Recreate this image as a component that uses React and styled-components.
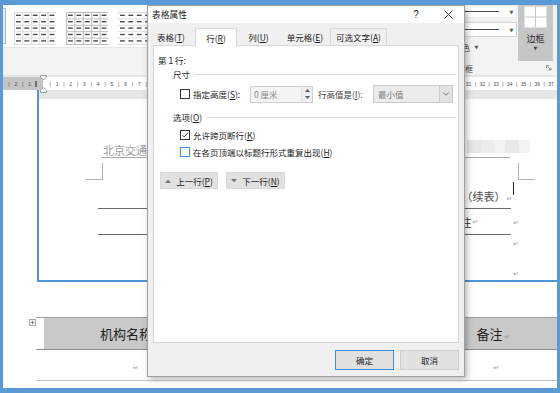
import React from 'react';
import styled, { createGlobalStyle } from 'styled-components';

const BLUE = '#5b9bd5';
const FONT = '"Noto Sans CJK SC", "Noto Sans", sans-serif';

const GlobalStyle = createGlobalStyle`
  html, body { margin: 0; padding: 0; background: #ffffff; }
  body { font-family: ${FONT}; }
  * { box-sizing: border-box; }
`;

const Frame = styled.div`
  position: relative;
  width: 560px;
  height: 393px;
  border-style: solid;
  border-color: ${BLUE};
  border-width: 5px 3px 5px 3px;
  background: #fff;
  display: flex;
  flex-direction: column;
  overflow: hidden;
`;

/* ---------------- Ribbon ---------------- */
const Ribbon = styled.div`
  height: 70px;
  flex: none;
  display: flex;
  background: #f3f3f3;
`;
const GalleryGroup = styled.div`
  flex: 1;
  display: flex;
  flex-direction: column;
`;
const Gallery = styled.div`
  height: 43px;
  background: #fff;
  display: flex;
  align-items: flex-start;
  padding-top: 7px;
  gap: 10px;
  border-bottom: 1px solid #e6e6e6;
`;
const EdgeItem = styled.div`
  width: 3px;
  height: 36px;
  margin-top: -4px;
  margin-right: -2px;
  border: 1px solid #b9b9b9;
  border-left: none;
  background: #ededed;
`;
const BordersGroup = styled.div`
  width: 140px;
  display: flex;
  flex-direction: column;
`;
const BordersTop = styled.div`
  height: 56px;
  display: flex;
  padding-right: 4px;
`;
const LineControls = styled.div`
  width: 100px;
  margin-right: 1px;
  display: flex;
  flex-direction: column;
`;
const LineBox = styled.div`
  height: ${(p) => p.h}px;
  margin-top: ${(p) => p.mt}px;
  background: #fff;
  border: 1px solid ${(p) => p.bc};
  display: flex;
  align-items: center;
`;
const LineSample = styled.div`
  flex: 1;
  height: 1px;
  background: #4a4a4a;
  margin-right: 8px;
`;
const SmallArrow = styled.span`
  width: 9px;
  font-family: "DejaVu Sans", sans-serif;
  font-size: 5px;
  color: #555;
  text-align: center;
`;
const PenRow = styled.div`
  margin-top: 4px;
  height: 12px;
  display: flex;
  align-items: center;
  padding-left: 29px;
  font-size: 8px;
  color: #333;
  gap: 2px;
`;
const BigButton = styled.div`
  width: 35px;
  height: 56px;
  background: #c6c6c6;
  display: flex;
  flex-direction: column;
  align-items: center;
  padding-top: 1px;
`;
const BigLabel = styled.div`
  margin-top: 5px;
  font-size: 9px;
  line-height: 11px;
  color: #2b2b2b;
`;
const BigArrow = styled.div`
  font-family: "DejaVu Sans", sans-serif;
  font-size: 5px;
  line-height: 8px;
  color: #444;
`;
const GroupLabelRow = styled.div`
  height: 14px;
  display: flex;
  align-items: center;
  padding-right: 5px;
  font-size: 8px;
  color: #444;
`;
const GroupLabel = styled.span`
  margin-left: 40px;
  width: 16px;
  white-space: nowrap;
`;
const Spacer = styled.div`
  flex: 1;
`;

/* ---------------- Ruler ---------------- */
const RulerBar = styled.div`
  position: relative;
  z-index: 1;
  height: 15px;
  flex: none;
  background: #e6e6e6;
  padding-top: 2px;
`;
const RulerStrip = styled.div`
  height: 13px;
  background: linear-gradient(to right, #c4c4c4 0, #c4c4c4 40px, #ffffff 40px);
  display: flex;
  align-items: center;
  padding-left: 2.6px;
  font-family: "Liberation Sans", sans-serif;
  font-size: 5px;
  color: #4d4d4d;
  white-space: nowrap;
  overflow: hidden;
`;
const RulerCell = styled.span`
  flex: none;
  width: 6.86px;
  display: flex;
  justify-content: center;
`;
const RulerBlock = styled.span`
  width: 2px;
  height: 6px;
  background: #6e6e6e;
`;
const IndentMarker = styled.svg`
  position: absolute;
  left: 37px;
  top: 0;
`;

/* ---------------- Document ---------------- */
const DocArea = styled.div`
  flex: 1;
  display: flex;
  flex-direction: column;
  background: #fff;
`;
const TopSection = styled.div`
  height: 192px;
  flex: none;
  display: flex;
`;
const Gutter = styled.div`
  width: 34px;
  flex: none;
`;
const Highlight = styled.div`
  flex: 1;
  display: flex;
  flex-direction: column;
  border-left: 2px solid #4f93d8;
  border-bottom: 2px solid #4f93d8;
`;
const GrayBand = styled.div`
  height: 9px;
  flex: none;
  background: #e6e6e6;
`;
const Page = styled.div`
  flex: 1;
  display: flex;
  flex-direction: column;
  padding-top: 44px;
  font-size: 11px;
  line-height: 14px;
`;
const HeaderRow = styled.div`
  margin: 0 47px 0 63px;
  height: 15px;
  border-bottom: 1px solid #a9a9a9;
  display: flex;
  justify-content: space-between;
  align-items: flex-start;
`;
const HeaderText = styled.span`
  color: #9c9c9c;
  padding-left: 1px;
`;
const Mosaic = styled.div`
  display: flex;
  margin-right: -20px;
  margin-top: -3px;
  height: 13px;
`;
const MosaicCell = styled.div`
  width: ${(p) => p.w}px;
  background: ${(p) => p.c};
`;
const CornerRow = styled.div`
  margin-top: 5px;
  height: 17px;
  display: flex;
  justify-content: space-between;
  padding: 0 22px 0 47px;
`;
const CornerMark = styled.div`
  width: 17px;
  height: 17px;
  border-bottom: 1px solid #b2b2b2;
  ${(p) => (p.side === 'left' ? 'border-right: 1px solid #b2b2b2;' : 'border-left: 1px solid #b2b2b2;')}
`;
const ContRow = styled.div`
  height: 28px;
  display: flex;
  justify-content: flex-end;
  align-items: flex-end;
  padding: 0 43px 5px 0;
  color: #4a4a4a;
`;
const Caret = styled.span`
  align-self: flex-start;
  margin-top: 2px;
  width: 1px;
  height: 13px;
  background: #222;
`;
const Mark = styled.span`
  font-family: "DejaVu Sans", sans-serif;
  font-size: 6.5px;
  line-height: 8px;
  color: #8c8c8c;
  margin-left: ${(p) => p.ml || 0}px;
  margin-right: ${(p) => p.mr || 0}px;
`;
const TableLine = styled.div`
  display: flex;
  margin-left: 59px;
`;
const Table1 = styled.div`
  width: 413px;
  height: 27px;
  border-top: 1px solid #6b6b6b;
  border-bottom: 1px solid #6b6b6b;
  display: flex;
  align-items: center;
  justify-content: flex-end;
  padding-right: 33px;
  color: #3a3a3a;
`;
const EndMarkCol = styled.div`
  padding: 5px 0 0 2px;
`;
const EmptyPara = styled.div`
  margin-top: ${(p) => p.mt}px;
  height: 12px;
  display: flex;
  align-items: center;
  padding-left: 474px;
`;

const BottomSection = styled.div`
  flex: 1;
  padding-top: 35px;
`;
const Table2 = styled.div`
  position: relative;
  margin-left: 33px;
  font-size: 13px;
  color: #1f1f1f;
`;
const TableHandle = styled.svg`
  position: absolute;
  left: -7px;
  top: -6px;
`;
const HeadRow = styled.div`
  height: 33px;
  border-top: 1px solid #a0a0a0;
  border-bottom: 1px solid #8c8c8c;
  padding-left: 8px;
  display: flex;
`;
const HeadFill = styled.div`
  flex: 1;
  background: #c9c9c9;
  display: flex;
  align-items: center;
  justify-content: space-between;
  padding: 0 47px 0 56px;
`;
const BodyRow = styled.div`
  height: 31px;
  border-bottom: 1px solid #c2c2c2;
  display: flex;
  align-items: flex-end;
  justify-content: space-between;
  padding: 0 58px 8px 97px;
`;

/* ---------------- Dialog ---------------- */
const Dialog = styled.div`
  position: absolute;
  left: 144px;
  top: 0;
  width: 318px;
  height: 372px;
  background: #f0f0f0;
  border: 1px solid #a0a0a0;
  box-shadow: 2px 2px 6px rgba(0, 0, 0, 0.3);
  display: flex;
  flex-direction: column;
  font-family: ${FONT};
  font-size: 8.5px;
  line-height: 12px;
  color: #1b1b1b;
  z-index: 5;
`;
const TitleBar = styled.div`
  height: 17px;
  flex: none;
  background: #fff;
  display: flex;
  align-items: center;
  padding-left: 4px;
`;
const Title = styled.div`
  flex: 1;
  font-size: 8.75px;
`;
const TitleBtn = styled.div`
  width: 32px;
  height: 17px;
  display: flex;
  align-items: center;
  justify-content: center;
  font-family: "Liberation Sans", sans-serif;
  font-size: 10px;
  color: #222;
`;
const DialogBody = styled.div`
  flex: 1;
  display: flex;
  flex-direction: column;
  padding: 5px 5px 6px 5px;
`;
const TabsRow = styled.div`
  height: 17px;
  display: flex;
  position: relative;
  z-index: 1;
`;
const Tab = styled.div`
  width: ${(p) => p.w}px;
  height: ${(p) => (p.selected ? 18 : 17)}px;
  display: flex;
  align-items: center;
  justify-content: center;
  padding-right: ${(p) => p.pr || 0}px;
  background: ${(p) => (p.selected ? '#fff' : '#f0f0f0')};
  border: 1px solid ${(p) => (p.selected || p.hover ? '#d9d9d9' : 'transparent')};
  border-bottom: none;
`;
const Panel = styled.div`
  height: 298px;
  background: #fff;
  border: 1px solid #d9d9d9;
  display: flex;
  flex-direction: column;
  padding: 8px 3px 0 4px;
`;
const SectionHead = styled.div`
  display: flex;
  align-items: center;
  margin-top: ${(p) => p.mt}px;
  padding-left: 15px;
  height: 12px;
`;
const SectionRule = styled.div`
  flex: 1;
  height: 1px;
  background: #dcdcdc;
  margin-left: 5px;
`;
const FieldRow = styled.div`
  margin-top: ${(p) => p.mt}px;
  height: ${(p) => p.h}px;
  display: flex;
  align-items: center;
  padding-left: 22px;
`;
const Check = styled.div`
  width: 10px;
  height: 10px;
  flex: none;
  border: 1px solid ${(p) => (p.focus ? '#3b8ce3' : '#333')};
  background: #fff;
  display: flex;
  align-items: center;
  justify-content: center;
`;
const CheckLabel = styled.span`
  margin-left: 3px;
  width: ${(p) => (p.w ? `${p.w}px` : 'auto')};
  white-space: nowrap;
`;
const DisabledLabel = styled.span`
  margin-left: 5px;
  width: 55px;
  color: #454545;
  white-space: nowrap;
`;
const NumberInput = styled.div`
  width: 63px;
  height: 17px;
  border: 1px solid #cfcfcf;
  background: #f4f4f4;
  display: flex;
`;
const InputText = styled.div`
  flex: 1;
  padding-left: 3px;
  color: #8a8a8a;
  display: flex;
  align-items: center;
`;
const Spin = styled.div`
  width: 11px;
  display: flex;
  flex-direction: column;
  align-items: center;
  justify-content: space-around;
  border-left: 1px solid #e2e2e2;
  background: #f0f0f0;
`;
const Select = styled.div`
  width: 80px;
  height: 18px;
  border: 1px solid #cccccc;
  background: #ebebeb;
  display: flex;
`;
const SelectText = styled.div`
  flex: 1;
  padding-left: 4px;
  color: #7d7d7d;
  display: flex;
  align-items: center;
`;
const SelectArrow = styled.div`
  width: 13px;
  border-left: 1px solid #cccccc;
  background: #e2e2e2;
  display: flex;
  align-items: center;
  justify-content: center;
`;
const NavRow = styled.div`
  margin-top: 14px;
  padding-left: 2px;
  display: flex;
  gap: 8px;
`;
const NavButton = styled.div`
  width: ${(p) => p.w}px;
  height: 17px;
  background: #e1e1e1;
  border: 1px solid #d9d9d9;
  display: flex;
  align-items: center;
  justify-content: center;
  gap: 5px;
`;
const Footer = styled.div`
  margin-top: 7px;
  height: 20px;
  display: flex;
  justify-content: flex-end;
  gap: 6px;
`;
const DlgButton = styled.div`
  width: 59px;
  height: 20px;
  background: #e1e1e1;
  border: 1px solid ${(p) => (p.primary ? '#3d8ee0' : '#cccccc')};
  display: flex;
  align-items: center;
  justify-content: center;
`;
const U = styled.span`
  text-decoration: underline;
  text-underline-offset: 1px;
`;

/* ---------------- Pieces ---------------- */
function GalleryThumb({ variant }) {
  const cw = 8.4;
  const ch = 6.4;
  const stroke = variant === 'bordered' ? '#bdbdbd' : '#dcdcdc';
  const els = [];
  for (let r = 0; r <= 5; r++) {
    els.push(<line key={`h${r}`} x1={0} x2={42} y1={r * ch + 0.5} y2={r * ch + 0.5} stroke={stroke} strokeWidth={1} />);
  }
  if (variant !== 'lines') {
    for (let c = 0; c <= 5; c++) {
      els.push(<line key={`v${c}`} y1={0} y2={32.5} x1={c * cw + 0.5} x2={c * cw + 0.5} stroke={stroke} strokeWidth={1} />);
    }
  }
  for (let r = 0; r < 5; r++) {
    for (let c = 0; c < 5; c++) {
      els.push(<rect key={`d${r}-${c}`} x={c * cw + 2} y={r * ch + 2.6} width={4.8} height={1.4} fill="#4d4d4d" />);
    }
  }
  return (
    <svg width="42" height="33" viewBox="0 0 42 33">
      {els}
    </svg>
  );
}

function BorderIcon() {
  return (
    <svg width="23" height="22" viewBox="0 0 23 22">
      <rect x="0.5" y="0.5" width="22" height="21" fill="#fff" stroke="#e2e2e2" />
      <line x1="11.5" y1="0.5" x2="11.5" y2="21.5" stroke="#c6c6c6" />
      <line x1="0.5" y1="11" x2="22.5" y2="11" stroke="#c6c6c6" />
    </svg>
  );
}

function Launcher() {
  return (
    <svg width="6" height="6" viewBox="0 0 6 6">
      <path d="M0.5 3 V0.5 H3" stroke="#7a7a7a" fill="none" strokeWidth="0.8" />
      <path d="M1.5 1.5 L5 5 M5 2.6 V5 H2.6" stroke="#7a7a7a" fill="none" strokeWidth="0.8" />
    </svg>
  );
}

function Ruler() {
  const cells = [];
  const left = ['|', '2', '|', '1'];
  left.forEach((t, i) => cells.push(<RulerCell key={`l${i}`}>{t}</RulerCell>));
  cells.push(
    <RulerCell key="blk">
      <RulerBlock />
    </RulerCell>
  );
  cells.push(<RulerCell key="zero" />);
  for (let n = 1; n <= 37; n++) {
    cells.push(<RulerCell key={`t${n}`}>|</RulerCell>);
    cells.push(<RulerCell key={`n${n}`}>{n}</RulerCell>);
  }
  return (
    <RulerBar>
      <RulerStrip>{cells}</RulerStrip>
      <IndentMarker width="7" height="18" viewBox="0 0 7 18">
        <path d="M0.5 0.5 H6.5 V2 L3.5 5 L0.5 2 Z" fill="#fff" stroke="#8a8a8a" strokeWidth="0.8" />
        <path d="M3.5 12.5 L6.5 15 V17.5 H0.5 V15 Z" fill="#fff" stroke="#8a8a8a" strokeWidth="0.8" />
      </IndentMarker>
    </RulerBar>
  );
}

function CheckMark() {
  return (
    <svg width="8" height="8" viewBox="0 0 8 8">
      <path d="M1.2 4 L3.2 6 L6.8 1.8" stroke="#333" strokeWidth="0.9" fill="none" />
    </svg>
  );
}

function Tri({ up }) {
  return (
    <svg width="6" height="4" viewBox="0 0 6 4">
      <path d={up ? 'M0 4 L3 0.5 L6 4 Z' : 'M0 0 L3 3.5 L6 0 Z'} fill="#7a7a7a" />
    </svg>
  );
}

function SpinTri({ up }) {
  return (
    <svg width="5" height="3" viewBox="0 0 5 3">
      <path d={up ? 'M0 3 L2.5 0 L5 3 Z' : 'M0 0 L2.5 3 L5 0 Z'} fill="#5a5a5a" />
    </svg>
  );
}

function Chevron() {
  return (
    <svg width="6" height="4" viewBox="0 0 6 4">
      <path d="M0.5 0.8 L3 3.2 L5.5 0.8" stroke="#6a6a6a" strokeWidth="0.9" fill="none" />
    </svg>
  );
}

function CloseIcon() {
  return (
    <svg width="9" height="9" viewBox="0 0 9 9">
      <path d="M0.5 0.5 L8.5 8.5 M8.5 0.5 L0.5 8.5" stroke="#222" strokeWidth="0.9" />
    </svg>
  );
}

function HandleIcon() {
  return (
    <svg width="7" height="7" viewBox="0 0 7 7">
      <rect x="0.5" y="0.5" width="6" height="6" fill="#f3f3f3" stroke="#a8a8a8" />
      <path d="M3.5 1.8 V5.2 M1.8 3.5 H5.2" stroke="#777" strokeWidth="0.8" />
    </svg>
  );
}

export default function App() {
  return (
    <>
      <GlobalStyle />
      <Frame>
        <Ribbon>
          <GalleryGroup>
            <Gallery>
              <EdgeItem />
              <GalleryThumb variant="grid" />
              <GalleryThumb variant="bordered" />
              <GalleryThumb variant="lines" />
              <GalleryThumb variant="grid" />
            </Gallery>
          </GalleryGroup>
          <BordersGroup>
            <BordersTop>
              <LineControls>
                <LineBox h={13} mt={0} bc="#ececec">
                  <LineSample />
                  <SmallArrow>▼</SmallArrow>
                </LineBox>
                <LineBox h={15} mt={4} bc="#d4d4d4">
                  <LineSample />
                  <SmallArrow>▼</SmallArrow>
                </LineBox>
                <PenRow>
                  <span>笔颜色</span>
                  <SmallArrow>▼</SmallArrow>
                </PenRow>
              </LineControls>
              <BigButton>
                <BorderIcon />
                <BigLabel>边框</BigLabel>
                <BigArrow>▼</BigArrow>
              </BigButton>
            </BordersTop>
            <GroupLabelRow>
              <GroupLabel>边框</GroupLabel>
              <Spacer />
              <Launcher />
            </GroupLabelRow>
          </BordersGroup>
        </Ribbon>

        <Ruler />

        <DocArea>
          <TopSection>
            <Gutter />
            <Highlight>
              <GrayBand />
              <Page>
                <HeaderRow>
                  <HeaderText>北京交通大学</HeaderText>
                  <Mosaic>
                    <MosaicCell w={14} c="#e6e6e6" />
                    <MosaicCell w={14} c="#ececec" />
                    <MosaicCell w={10} c="#f3f3f3" />
                    <MosaicCell w={14} c="#e8e8e8" />
                    <MosaicCell w={11} c="#f4f4f4" />
                  </Mosaic>
                </HeaderRow>
                <CornerRow>
                  <CornerMark side="left" />
                  <CornerMark side="right" />
                </CornerRow>
                <ContRow>
                  <span>（续表）</span>
                  <Mark ml={1} mr={1}>↵</Mark>
                  <Caret />
                </ContRow>
                <TableLine>
                  <Table1>
                    <span>备注</span>
                    <Mark ml={1}>↵</Mark>
                  </Table1>
                  <EndMarkCol>
                    <Mark>↵</Mark>
                  </EndMarkCol>
                </TableLine>
                <EmptyPara mt={3}>
                  <Mark>↵</Mark>
                </EmptyPara>
                <EmptyPara mt={18}>
                  <Mark>↵</Mark>
                </EmptyPara>
              </Page>
            </Highlight>
          </TopSection>

          <BottomSection>
            <Table2>
              <TableHandle width="7" height="7" viewBox="0 0 7 7" as="div">
                <HandleIcon />
              </TableHandle>
              <HeadRow>
                <HeadFill>
                  <span>机构名称</span>
                  <span>
                    备注<Mark ml={2}>↵</Mark>
                  </span>
                </HeadFill>
              </HeadRow>
              <BodyRow>
                <Mark>↵</Mark>
                <Mark>↵</Mark>
              </BodyRow>
            </Table2>
          </BottomSection>
        </DocArea>

        <Dialog>
          <TitleBar>
            <Title>表格属性</Title>
            <TitleBtn>?</TitleBtn>
            <TitleBtn>
              <CloseIcon />
            </TitleBtn>
          </TitleBar>
          <DialogBody>
            <TabsRow>
              <Tab w={42} pr={6}>
                表格(<U>T</U>)
              </Tab>
              <Tab w={42} selected>
                行(<U>R</U>)
              </Tab>
              <Tab w={43}>
                列(<U>U</U>)
              </Tab>
              <Tab w={50}>
                单元格(<U>E</U>)
              </Tab>
              <Tab w={57} hover>
                可选文字(<U>A</U>)
              </Tab>
            </TabsRow>
            <Panel>
              <div>第 1 行:</div>
              <SectionHead mt={2}>
                <span>尺寸</span>
                <SectionRule />
              </SectionHead>
              <FieldRow mt={5} h={18}>
                <Check />
                <CheckLabel w={57}>
                  指定高度(<U>S</U>):
                </CheckLabel>
                <NumberInput>
                  <InputText>0 厘米</InputText>
                  <Spin>
                    <SpinTri up />
                    <SpinTri />
                  </Spin>
                </NumberInput>
                <DisabledLabel>
                  行高值是(<U>I</U>):
                </DisabledLabel>
                <Select>
                  <SelectText>最小值</SelectText>
                  <SelectArrow>
                    <Chevron />
                  </SelectArrow>
                </Select>
              </FieldRow>
              <SectionHead mt={8}>
                <span>
                  选项(<U>O</U>)
                </span>
                <SectionRule />
              </SectionHead>
              <FieldRow mt={6} h={12}>
                <Check>
                  <CheckMark />
                </Check>
                <CheckLabel>
                  允许跨页断行(<U>K</U>)
                </CheckLabel>
              </FieldRow>
              <FieldRow mt={5} h={12}>
                <Check focus />
                <CheckLabel>
                  在各页顶端以标题行形式重复出现(<U>H</U>)
                </CheckLabel>
              </FieldRow>
              <NavRow>
                <NavButton w={58}>
                  <Tri up />
                  <span>
                    上一行(<U>P</U>)
                  </span>
                </NavButton>
                <NavButton w={59}>
                  <Tri />
                  <span>
                    下一行(<U>N</U>)
                  </span>
                </NavButton>
              </NavRow>
            </Panel>
            <Footer>
              <DlgButton primary>确定</DlgButton>
              <DlgButton>取消</DlgButton>
            </Footer>
          </DialogBody>
        </Dialog>
      </Frame>
    </>
  );
}
